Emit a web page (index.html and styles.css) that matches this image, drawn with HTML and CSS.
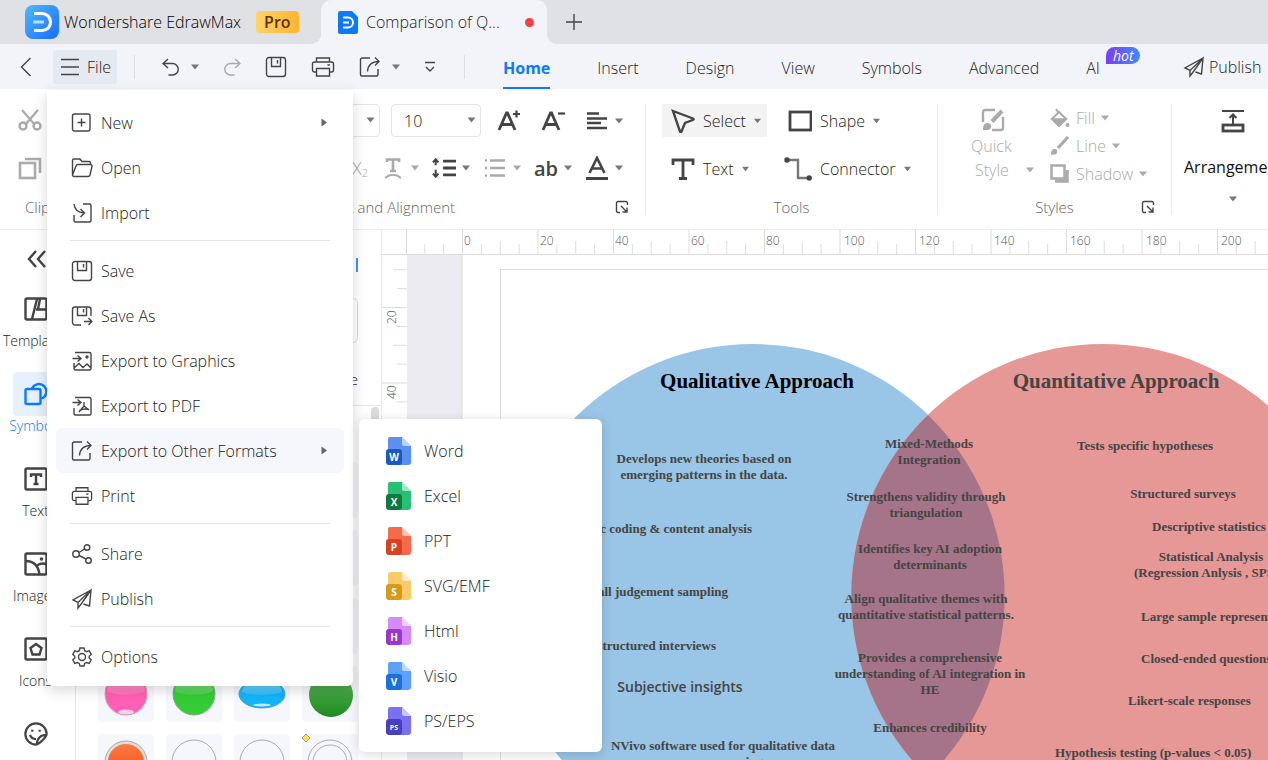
FILE: index.html
```html
<!DOCTYPE html>
<html lang="en">
<head>
	<meta charset="UTF-8">
	<title>Wondershare EdrawMax</title>
	<link rel="stylesheet" href="styles.css">
</head>
<body>
	<!-- icon sprite -->
	<svg class="sprite" aria-hidden="true">
		<defs>
			<linearGradient id="g-logo" x1="0" y1="0" x2="1" y2="1"><stop offset="0" stop-color="#4db8ff"/><stop offset="1" stop-color="#1a6dff"/></linearGradient>
			<linearGradient id="g-gloss" x1="0" y1="0" x2="0" y2="1"><stop offset="0" stop-color="#fff" stop-opacity=".5"/><stop offset="1" stop-color="#fff" stop-opacity=".1"/></linearGradient>
			<linearGradient id="g-green" x1="0" y1="0" x2="0" y2="1"><stop offset="0" stop-color="#5cb85c"/><stop offset="1" stop-color="#1f8a1f"/></linearGradient>
			<linearGradient id="g-orange" x1="0" y1="0" x2="0" y2="1"><stop offset="0" stop-color="#ff7a45"/><stop offset="1" stop-color="#f04a10"/></linearGradient>
		</defs>
		<symbol id="caret" viewBox="0 0 8 6"><path d="M0 .5h8L4 5.500z" fill="currentColor"/></symbol>
		<symbol id="caret-right" viewBox="0 0 6 8"><path d="M.5 0v8L6 4z" fill="currentColor"/></symbol>
		<symbol id="brand" viewBox="0 0 34 34"><rect width="34" height="34" rx="8" fill="url(#g-logo)"/><path d="M9 8.500h8a8.500 8.500 0 0 1 0 17H9" fill="none" stroke="#fff" stroke-width="3.200"/><path d="M8 17h11" stroke="#b9dcff" stroke-width="3"/></symbol>
		<symbol id="doc-tab" viewBox="0 0 20 23"><path d="M2 0h12l6 6v15a2 2 0 0 1-2 2H2a2 2 0 0 1-2-2V2a2 2 0 0 1 2-2z" fill="#0a7aff"/><path d="M5 6.500h5a5 5 0 0 1 0 10H5M5 11.500h6" fill="none" stroke="#fff" stroke-width="2"/></symbol>
		<symbol id="plus" viewBox="0 0 16 16"><path d="M8 0v16M0 8h16"/></symbol>
		<symbol id="back" viewBox="0 0 12 20"><path d="M11 1L2 10l9 9"/></symbol>
		<symbol id="lines" viewBox="0 0 18 18"><path d="M0 1.500h18M0 9h18M0 16.500h18"/></symbol>
		<symbol id="undo" viewBox="0 0 18 18"><path d="M6 1L1 5.500 6 10M1 5.500h9.500a5.700 5.700 0 0 1 0 11.500H6.500"/></symbol>
		<symbol id="redo" viewBox="0 0 18 18"><path d="M12 1l5 4.500-5 4.500M17 5.500H7.500a5.700 5.700 0 0 0 0 11.500h4"/></symbol>
		<symbol id="save" viewBox="0 0 22 22"><rect x="1.500" y="1.500" width="19" height="19" rx="2.500"/><path d="M6.500 2v8.500h9V2M12.500 4v3.500"/></symbol>
		<symbol id="save-as" viewBox="0 0 22 22"><path d="M10 20H4A2.500 2.500 0 0 1 1.500 17.500v-13A2.500 2.500 0 0 1 4 2h13.500A2.500 2.500 0 0 1 20 4.500V11M6.500 2v8.500h9V2M12.500 4v3.500M13 16.500h7.500M17.500 13l3.300 3.500-3.300 3.500"/></symbol>
		<symbol id="print" viewBox="0 0 24 22"><path d="M5.500 6V2h13v4M5.500 16H3.500A2 2 0 0 1 1.500 14V8a2 2 0 0 1 2-2h17a2 2 0 0 1 2 2v6a2 2 0 0 1-2 2h-2M5.500 12.500h13V20h-13zM16.500 9h2.500"/></symbol>
		<symbol id="export" viewBox="0 0 22 22"><path d="M11 2H3A1.500 1.500 0 0 0 1.500 3.500v15A1.500 1.500 0 0 0 3 20h14.500a1.500 1.500 0 0 0 1.500-1.500V13M16 1.500L20 5.500l-4 4M20 5.500C13 5.500 9 9 8.500 15.500"/></symbol>
		<symbol id="more" viewBox="0 0 12 12"><path d="M1 1.500h10M2 6l4 4 4-4"/></symbol>
		<symbol id="plane" viewBox="0 0 22 22"><path d="M20 2L2 12l5 2.500L20 2l-1.500 16-6-2M7 14.500V20l3.500-4.500L20 2"/></symbol>
		<symbol id="new" viewBox="0 0 22 22"><rect x="1.500" y="2" width="17.500" height="17" rx="2"/><path d="M10.500 6.500v8M6.500 10.500h8"/></symbol>
		<symbol id="open" viewBox="0 0 22 22"><path d="M1.500 18V3.500A1.500 1.500 0 0 1 3 2h6l2 2.500h7A1.500 1.500 0 0 1 19.500 6v1.500M1.500 18L5 9a2 2 0 0 1 2-1.500h12.500a1.500 1.500 0 0 1 1.500 2L19 18a2 2 0 0 1-2 1.500H3A1.500 1.500 0 0 1 1.500 18z"/></symbol>
		<symbol id="import" viewBox="0 0 22 22"><path d="M12 2h6.500A1.500 1.500 0 0 1 20 3.500v15a1.500 1.500 0 0 1-1.500 1.500h-14A1.500 1.500 0 0 1 3 18.500V13M3 2c.5 5.500 3.500 8.500 10 9M9.500 7l4 4-4 4"/></symbol>
		<symbol id="to-image" viewBox="0 0 22 22"><path d="M4 2.500h14.500A1.500 1.500 0 0 1 20 4v14.500a1.500 1.500 0 0 1-1.500 1.500h-14A1.500 1.500 0 0 1 3 18.500V13M1.500 8.500h8M6.500 5.500l3.500 3-3.500 3M3 18l5-4.500 4 4 4-3.500 4 4"/><circle cx="16" cy="7" r="1"/></symbol>
		<symbol id="to-pdf" viewBox="0 0 22 22"><path d="M4 2.500h14.500A1.500 1.500 0 0 1 20 4v14.500a1.500 1.500 0 0 1-1.500 1.500h-14A1.500 1.500 0 0 1 3 18.500V13M1.500 7.500h8M6.500 4.500l3.500 3-3.500 3M13 7v4l-5 6M13 11l5 4M8.500 15.500c3-1.500 6-2 9.500-1"/></symbol>
		<symbol id="share" viewBox="0 0 22 22"><circle cx="5" cy="11" r="3.200"/><circle cx="16" cy="4.500" r="2.800"/><circle cx="17.500" cy="17.500" r="2.800"/><path d="M8 9.500l5.500-3.500M8 12.500l7 3.500"/></symbol>
		<symbol id="gear" viewBox="0 0 22 22"><path d="M9 2h4l.7 2.700 1.800 1 2.700-.8 2 3.500-2 1.900v1.600l2 2-2 3.400-2.700-.8-1.800 1L13 20H9l-.7-2.500-1.800-1-2.700.8-2-3.400 2-2v-1.600l-2-1.900 2-3.500 2.700.8 1.800-1z"/><circle cx="11" cy="11" r="3.500"/></symbol>
		<symbol id="launcher" viewBox="0 0 14 14"><path d="M5 12.500H3A1.500 1.500 0 0 1 1.500 11V3A1.500 1.500 0 0 1 3 1.500h8A1.500 1.500 0 0 1 12.500 3v2M6 6l5.500 5.500M12 7.500V12H7.500"/></symbol>
		<symbol id="font-up" viewBox="0 0 24 24"><path d="M2 21L9.500 4h1L18 21M5 15.500h10" stroke-width="2.800"/><path d="M16 5h7M19.500 1.500v7" stroke-width="2.200"/></symbol>
		<symbol id="font-down" viewBox="0 0 24 24"><path d="M2 21L9.500 4h1L18 21M5 15.500h10" stroke-width="2.800"/><path d="M17 4.500h7" stroke-width="2.200"/></symbol>
		<symbol id="align" viewBox="0 0 24 24"><path d="M2 4.500h12M2 9.500h20M2 14h14M2 19h20" stroke-width="2.700"/></symbol>
		<symbol id="arc-text" viewBox="0 0 24 24"><path d="M6 6V3.500h12V6M12 3.500V15M9 15h6" stroke-width="2.600"/><path d="M4 22c5-4 11-4 16 0" stroke-width="2"/></symbol>
		<symbol id="spacing" viewBox="0 0 26 24"><path d="M12 4.500h14M12 12h14M12 19.500h14" stroke-width="3"/><path d="M4 3v6M1 6l3-3.500L7 6M4 14v7M1 18l3 3.500L7 18" stroke-width="2.200"/></symbol>
		<symbol id="list" viewBox="0 0 24 24"><path d="M7 4.500h15M7 12h15M7 19.500h15M2 4.500h2M2 12h2M2 19.500h2" stroke-width="2.400"/></symbol>
		<symbol id="font-color" viewBox="0 0 24 24"><path d="M4.500 17L12 2l7.500 15M7 12.500h10" stroke-width="2.600"/><path d="M1 22.500h22" stroke-width="3"/></symbol>
		<symbol id="cut" viewBox="0 0 24 24"><path d="M4 2l13 15M20 2L7 17" stroke-width="2.200"/><circle cx="5" cy="18" r="3.500" stroke-width="2.400"/><circle cx="19" cy="18" r="3.500" stroke-width="2.400"/></symbol>
		<symbol id="copy" viewBox="0 0 24 24"><rect x="2" y="7" width="15" height="15" stroke-width="2.600"/><path d="M7 3h15v14" stroke-width="2.600"/></symbol>
		<symbol id="cursor" viewBox="0 0 24 24"><path d="M2 2l20 7.500c1 .5 1 1-.2 1.500L14 14l-3.500 8.500c-.5 1-1.200 1-1.500 0z" stroke-width="2.400"/></symbol>
		<symbol id="rect" viewBox="0 0 24 24"><rect x="2" y="3" width="21" height="18" stroke-width="2.800"/></symbol>
		<symbol id="text" viewBox="0 0 24 24"><path d="M2 8V3h20v5M12 3v18M8 21.500h8" stroke-width="2.800"/></symbol>
		<symbol id="connector" viewBox="0 0 28 24"><path d="M3 3h11v18h10" stroke="#777" stroke-width="2.400"/><circle cx="3" cy="3" r="2.700" fill="currentColor" stroke="none"/><circle cx="25.200" cy="21" r="2.700" fill="currentColor" stroke="none"/></symbol>
		<symbol id="quick-style" viewBox="0 0 24 24"><path d="M14 2H4a2 2 0 0 0-2 2v10M22 9v11a2 2 0 0 1-2 2h-9" stroke-width="2.400"/><path d="M21 3L11 13.500" stroke-width="4"/><path d="M2 22c0-4 1-7 4.500-7s5 4 2.500 6c-2 1.500-5 1-7 1z" fill="currentColor" stroke="none"/></symbol>
		<symbol id="bucket" viewBox="0 0 20 20"><path d="M6 1l2 3M9 4l7 7-7 7-7-7z" stroke-width="2"/><path d="M2 11h14l-7 7z" fill="currentColor"/><circle cx="17.500" cy="17" r="2" fill="currentColor" stroke="none"/></symbol>
		<symbol id="brush" viewBox="0 0 20 20"><path d="M18 1L8 12" stroke-width="3.200"/><path d="M1 18.500c0-4 1.500-6 4-5.500s3 3.500 1 5c-1.500 1-3 .5-5 .5z" fill="currentColor" stroke="none"/></symbol>
		<symbol id="shadow" viewBox="0 0 20 20"><path d="M5 17h12V6" stroke-width="3.500"/><rect x="1.500" y="1.500" width="13" height="13" fill="#fff" stroke-width="2.500"/></symbol>
		<symbol id="arrange" viewBox="0 0 24 24"><path d="M1 2h22M12 15V6M8.500 9L12 5.500 15.500 9" stroke-width="2"/><rect x="2" y="16" width="20" height="6" stroke-width="2.800"/></symbol>
		<symbol id="collapse" viewBox="0 0 20 18"><path d="M9 1L2 9l7 8M18 1l-7 8 7 8"/></symbol>
		<symbol id="template" viewBox="0 0 24 24"><rect x="1.500" y="1.500" width="21" height="21" rx="1.500"/><path d="M13 2L8 22M12 12.500h10M16 2l-2 10"/></symbol>
		<symbol id="shapes" viewBox="0 0 24 24"><path d="M8 6.500a7.500 7.500 0 1 1 9.500 10"/><rect x="1.500" y="7" width="15" height="15" rx="1.500"/></symbol>
		<symbol id="text-box" viewBox="0 0 24 24"><rect x="1.500" y="1.500" width="21" height="21" rx="1.500"/><path d="M7 10V7.500h10V10M12 7.500v9M9.500 17h5"/></symbol>
		<symbol id="picture" viewBox="0 0 24 24"><rect x="1.500" y="1.500" width="21" height="21" rx="1.500"/><path d="M2 9c7 0 12 4 13.500 13M12.500 14c2.500-2.500 6-3 10-2"/><circle cx="17.500" cy="7" r="1" stroke-width="1.500"/></symbol>
		<symbol id="pentagon" viewBox="0 0 24 24"><rect x="1.500" y="1.500" width="21" height="21" rx="1.500"/><path d="M12 7l5.500 4-2 6.500h-7l-2-6.500z"/></symbol>
		<symbol id="sticker" viewBox="0 0 26 26"><path d="M24 14c-6 0-10 4-10 10M13 24.500A11.500 11.500 0 1 1 24.500 13c0 2-5 9.500-11.500 11.500zM6.500 14c1 3 3.500 4.500 6.500 4.500"/><path d="M9 8.500v2M17 8.500v2"/></symbol>
		<symbol id="file-format" viewBox="0 0 26 30"><path class="sheet-page" d="M5 1h12l9 9v16a3 3 0 0 1-3 3H6a3 3 0 0 1-3-3V3a2 2 0 0 1 2-2z"/><path d="M17 1l9 9h-7a2 2 0 0 1-2-2z" fill="#fff" opacity=".6"/><rect class="sheet-badge" x="1" y="13" width="16" height="16" rx="3"/></symbol>
	</svg>

	<div class="app">
		<header class="titlebar">
			<div class="brand">
				<svg class="logo"><use href="#brand"/></svg>
				<span>Wondershare EdrawMax</span>
				<span class="pro">Pro</span>
			</div>
			<div class="doc-tab">
				<svg><use href="#doc-tab"/></svg>
				<span>Comparison of Q...</span>
				<i class="unsaved"></i>
			</div>
			<button class="add-tab" aria-label="New tab"><svg class="ico"><use href="#plus"/></svg></button>
		</header>

		<div class="quickbar">
			<button class="qb-back" aria-label="Back"><svg class="ico"><use href="#back"/></svg></button>
			<div class="file-wrap">
				<button class="file-btn"><svg class="ico"><use href="#lines"/></svg>File</button>
				<ul class="menu">
					<li><button><svg class="ico"><use href="#new"/></svg>New<svg class="arrow"><use href="#caret-right"/></svg></button></li>
					<li><button><svg class="ico"><use href="#open"/></svg>Open</button></li>
					<li><button><svg class="ico"><use href="#import"/></svg>Import</button></li>
					<li class="sep"></li>
					<li><button><svg class="ico"><use href="#save"/></svg>Save</button></li>
					<li><button><svg class="ico"><use href="#save-as"/></svg>Save As</button></li>
					<li><button><svg class="ico"><use href="#to-image"/></svg>Export to Graphics</button></li>
					<li><button><svg class="ico"><use href="#to-pdf"/></svg>Export to PDF</button></li>
					<li class="open">
						<button><svg class="ico"><use href="#export"/></svg>Export to Other Formats<svg class="arrow"><use href="#caret-right"/></svg></button>
						<ul class="submenu">
							<li><button><svg class="fmt word"><use href="#file-format"/><text x="9" y="25">W</text></svg>Word</button></li>
							<li><button><svg class="fmt excel"><use href="#file-format"/><text x="9" y="25">X</text></svg>Excel</button></li>
							<li><button><svg class="fmt ppt"><use href="#file-format"/><text x="9" y="25">P</text></svg>PPT</button></li>
							<li><button><svg class="fmt svg"><use href="#file-format"/><text x="9" y="25">S</text></svg>SVG/EMF</button></li>
							<li><button><svg class="fmt html"><use href="#file-format"/><text x="9" y="25">H</text></svg>Html</button></li>
							<li><button><svg class="fmt visio"><use href="#file-format"/><text x="9" y="25">V</text></svg>Visio</button></li>
							<li><button><svg class="fmt ps"><use href="#file-format"/><text class="small" x="9" y="24">PS</text></svg>PS/EPS</button></li>
						</ul>
					</li>
					<li><button><svg class="ico"><use href="#print"/></svg>Print</button></li>
					<li class="sep"></li>
					<li><button><svg class="ico"><use href="#share"/></svg>Share</button></li>
					<li><button><svg class="ico"><use href="#plane"/></svg>Publish</button></li>
					<li class="sep"></li>
					<li><button><svg class="ico"><use href="#gear"/></svg>Options</button></li>
				</ul>
			</div>
			<span class="bar"></span>
			<div class="tools">
				<button class="with-caret" aria-label="Undo"><svg class="ico s18"><use href="#undo"/></svg><svg class="caret"><use href="#caret"/></svg></button>
				<button class="off" aria-label="Redo"><svg class="ico s18"><use href="#redo"/></svg></button>
				<button aria-label="Save"><svg class="ico"><use href="#save"/></svg></button>
				<button aria-label="Print"><svg class="ico wide"><use href="#print"/></svg></button>
				<button class="with-caret" aria-label="Export"><svg class="ico"><use href="#export"/></svg><svg class="caret"><use href="#caret"/></svg></button>
				<button aria-label="More"><svg class="ico s12"><use href="#more"/></svg></button>
			</div>
			<span class="bar tabs-bar"></span>
			<nav class="tabs">
				<a href="#" class="on">Home</a>
				<a href="#">Insert</a>
				<a href="#">Design</a>
				<a href="#">View</a>
				<a href="#">Symbols</a>
				<a href="#">Advanced</a>
				<a href="#">AI<span class="hot">hot</span></a>
			</nav>
			<button class="publish"><svg class="ico"><use href="#plane"/></svg>Publish</button>
		</div>

		<section class="ribbon">
			<div class="group clipboard">
				<div class="row"><button class="off" aria-label="Cut"><svg class="ico"><use href="#cut"/></svg></button></div>
				<div class="row"><button class="off" aria-label="Copy"><svg class="ico"><use href="#copy"/></svg></button></div>
				<div class="group-name">Clipboard</div>
			</div>
			<div class="group font">
				<div class="row">
					<label class="combo family"><select aria-label="Font"><option></option></select><svg class="caret"><use href="#caret"/></svg></label>
					<label class="combo size"><select aria-label="Font size"><option>10</option></select><svg class="caret"><use href="#caret"/></svg></label>
					<button class="grow" aria-label="Larger"><svg class="ico"><use href="#font-up"/></svg></button>
					<button class="grow" aria-label="Smaller"><svg class="ico"><use href="#font-down"/></svg></button>
					<button class="pair" aria-label="Align"><svg class="ico"><use href="#align"/></svg><svg class="caret"><use href="#caret"/></svg></button>
				</div>
				<div class="row second">
					<button class="off sub">X<sub>2</sub></button>
					<button class="pair off" aria-label="Text path"><svg class="ico"><use href="#arc-text"/></svg><svg class="caret"><use href="#caret"/></svg></button>
					<button class="pair" aria-label="Line spacing"><svg class="ico"><use href="#spacing"/></svg><svg class="caret"><use href="#caret"/></svg></button>
					<button class="pair off" aria-label="Bullets"><svg class="ico"><use href="#list"/></svg><svg class="caret"><use href="#caret"/></svg></button>
					<button class="pair"><span class="ab">ab</span><svg class="caret"><use href="#caret"/></svg></button>
					<button class="pair" aria-label="Font color"><svg class="ico"><use href="#font-color"/></svg><svg class="caret"><use href="#caret"/></svg></button>
				</div>
				<div class="group-name">Font and Alignment<svg class="ico launcher"><use href="#launcher"/></svg></div>
			</div>
			<div class="group draw">
				<div class="grid">
					<button class="on"><svg class="ico"><use href="#cursor"/></svg>Select<svg class="caret"><use href="#caret"/></svg></button>
					<button><svg class="ico"><use href="#rect"/></svg>Shape<svg class="caret"><use href="#caret"/></svg></button>
					<button><svg class="ico"><use href="#text"/></svg>Text<svg class="caret"><use href="#caret"/></svg></button>
					<button><svg class="ico conn"><use href="#connector"/></svg>Connector<svg class="caret"><use href="#caret"/></svg></button>
				</div>
				<div class="group-name">Tools</div>
			</div>
			<div class="group styles">
				<div class="style-body">
					<button class="quick off">
						<svg class="ico"><use href="#quick-style"/></svg>
						<span>Quick</span>
						<span class="quick-2">Style<svg class="caret"><use href="#caret"/></svg></span>
					</button>
					<div class="style-list">
						<button class="off"><svg class="ico"><use href="#bucket"/></svg>Fill<svg class="caret"><use href="#caret"/></svg></button>
						<button class="off"><svg class="ico"><use href="#brush"/></svg>Line<svg class="caret"><use href="#caret"/></svg></button>
						<button class="off"><svg class="ico"><use href="#shadow"/></svg>Shadow<svg class="caret"><use href="#caret"/></svg></button>
					</div>
				</div>
				<div class="group-name">Styles<svg class="ico launcher"><use href="#launcher"/></svg></div>
			</div>
			<div class="group arrange">
				<button>
					<svg class="ico"><use href="#arrange"/></svg>
					<span>Arrangement</span>
					<svg class="caret"><use href="#caret"/></svg>
				</button>
			</div>
		</section>

		<main class="work">
			<aside class="rail">
				<button class="collapse" aria-label="Collapse"><svg class="ico"><use href="#collapse"/></svg></button>
				<button class="rail-item"><span><svg class="ico"><use href="#template"/></svg></span>Templates</button>
				<button class="rail-item on"><span><svg class="ico"><use href="#shapes"/></svg></span>Symbols</button>
				<button class="rail-item"><span><svg class="ico"><use href="#text-box"/></svg></span>Text</button>
				<button class="rail-item"><span><svg class="ico"><use href="#picture"/></svg></span>Images</button>
				<button class="rail-item"><span><svg class="ico"><use href="#pentagon"/></svg></span>Icons</button>
				<button class="rail-item"><span><svg class="ico"><use href="#sticker"/></svg></span>Stickers</button>
			</aside>

			<aside class="library">
				<div class="lib-head">
					<div class="lib-tab"></div>
					<input class="lib-search" type="text" aria-label="Search symbols">
					<div class="lib-manage">Manage</div>
				</div>
				<div class="lib-body">
					<div class="cells">
						<div></div><div></div><div></div><div></div>
						<div></div><div></div><div></div><div></div>
						<div></div><div></div><div></div><div></div>
						<div><svg viewBox="0 0 56 56"><circle cx="28" cy="28" r="21" fill="#ff5fb4" stroke="#d9a" /><path d="M9 25a19 17 0 0 1 38 0c-8 5-30 5-38 0z" fill="url(#g-gloss)"/><ellipse cx="28" cy="46" rx="8" ry="2.500" fill="#fff" opacity=".7"/></svg></div>
						<div><svg viewBox="0 0 56 56"><circle cx="28" cy="28" r="21" fill="#35cc35" stroke="#8a8"/><path d="M9 25a19 17 0 0 1 38 0c-8 5-30 5-38 0z" fill="url(#g-gloss)"/></svg></div>
						<div><svg viewBox="0 0 56 56"><ellipse cx="28" cy="28" rx="23" ry="14" fill="#12b5fa" stroke="#59b"/><path d="M8 26a20 12 0 0 1 40 0c-9 4-31 4-40 0z" fill="url(#g-gloss)"/><ellipse cx="28" cy="39" rx="9" ry="1.500" fill="#fff" opacity=".7"/></svg></div>
						<div><svg viewBox="0 0 56 56"><circle cx="29" cy="29" r="22" fill="url(#g-green)"/></svg></div>
						<div><svg viewBox="0 0 56 56"><circle cx="28" cy="28" r="21" fill="#ddd" stroke="#aaa"/><circle cx="28" cy="28" r="18" fill="url(#g-orange)"/></svg></div>
						<div><svg viewBox="0 0 56 56"><circle cx="28" cy="28" r="22" fill="none" stroke="#aaa"/></svg></div>
						<div><svg viewBox="0 0 56 56"><circle cx="28" cy="28" r="22" fill="none" stroke="#aaa"/></svg></div>
						<div><svg viewBox="0 0 56 56"><circle cx="28" cy="28" r="22" fill="none" stroke="#aaa"/><circle cx="28" cy="28" r="17" fill="none" stroke="#aaa"/><path d="M4 0l4 4-4 4-4-4z" fill="#ffe04d" stroke="#a98"/></svg></div>
					</div>
				</div>
			</aside>

			<section class="stage">
				<div class="corner"></div>
				<svg class="ruler ruler-x">
					<defs>
						<pattern id="ticks-x" x="55" y="0" width="75.500" height="26" patternUnits="userSpaceOnUse">
							<path d="M.5 0v26M19.400 14v11M38.200 11v14M57.100 14v11" stroke="#ddd"/>
						</pattern>
					</defs>
					<rect width="100%" height="26" fill="url(#ticks-x)"/>
					<rect width="19" height="14" fill="#fff"/>
					<text x="57" y="15">0</text><text x="133" y="15">20</text><text x="208" y="15">40</text><text x="284" y="15">60</text><text x="359" y="15">80</text><text x="437" y="15">100</text><text x="512" y="15">120</text><text x="587" y="15">140</text><text x="663" y="15">160</text><text x="739" y="15">180</text><text x="814" y="15">200</text>
				</svg>
				<svg class="ruler ruler-y">
					<defs>
						<pattern id="ticks-y" x="0" y="52" width="26" height="75.500" patternUnits="userSpaceOnUse">
							<path d="M0 .5h26M15 19.400h11M11 38.200h15M15 57.100h11" stroke="#ddd"/>
						</pattern>
					</defs>
					<rect width="26" height="100%" fill="url(#ticks-y)"/>
					<text transform="translate(14 69) rotate(-90)">20</text>
					<text transform="translate(14 144) rotate(-90)">40</text>
				</svg>
				<svg class="canvas">
					<rect x="55" y="-10" width="2000" height="2000" fill="#fff" stroke="#ddd"/>
					<rect x="93.500" y="14.500" width="2000" height="2000" fill="none" stroke="#ddd"/>
					<circle cx="346" cy="341" r="252" fill="#99c5e6"/>
					<circle cx="696" cy="341" r="252" fill="#e59896"/>
					<path d="M521 160a252 252 0 0 1 0 362a252 252 0 0 1 0-362z" fill="#a67488"/>

					<g class="title">
						<text class="dark" x="350" y="133">Qualitative Approach</text>
						<text x="709" y="133">Quantitative Approach</text>
					</g>
					<g class="node">
						<text x="297" y="208">Develops new theories based on<tspan x="297" dy="16">emerging patterns in the data.</tspan></text>
						<text class="end" x="345" y="278">Thematic coding &amp; content analysis</text>
						<text class="end" x="321" y="341">Small judgement sampling</text>
						<text class="end" x="309" y="395">Semi-structured interviews</text>
						<text class="sans" x="273" y="437">Subjective insights</text>
						<text x="316" y="495">NVivo software used for qualitative data<tspan x="327" dy="16">processing</tspan></text>
					</g>
					<g class="node">
						<text x="522" y="193">Mixed-Methods<tspan x="522" dy="16">Integration</tspan></text>
						<text x="519" y="246">Strengthens validity through<tspan x="519" dy="16">triangulation</tspan></text>
						<text x="523" y="298">Identifies key AI adoption<tspan x="523" dy="16">determinants</tspan></text>
						<text x="519" y="348">Align qualitative themes with<tspan x="519" dy="16">quantitative statistical patterns.</tspan></text>
						<text x="523" y="407">Provides a comprehensive<tspan x="523" dy="16">understanding of AI integration in</tspan><tspan x="523" dy="16">HE</tspan></text>
						<text x="523" y="477">Enhances credibility</text>
					</g>
					<g class="node">
						<text x="738" y="195">Tests specific hypotheses</text>
						<text x="776" y="243">Structured surveys</text>
						<text class="start" x="745" y="276">Descriptive statistics</text>
						<text x="804" y="306">Statistical Analysis</text>
						<text class="start" x="727" y="322">(Regression Anlysis , SPSS)</text>
						<text class="start" x="734" y="366">Large sample representation</text>
						<text class="start" x="734" y="408">Closed-ended questions</text>
						<text class="start" x="721" y="450">Likert-scale responses</text>
						<text class="start" x="648" y="502">Hypothesis testing (p-values &lt; 0.05)</text>
					</g>
				</svg>
			</section>
		</main>
	</div>
</body>
</html>
```

FILE: styles.css
```css
*{margin:0;padding:0;box-sizing:border-box;}
body{font-family:"Open Sans","Noto Sans",sans-serif;font-size:16px;font-weight:300;color:#222;}
ul{list-style:none;}
a{color:inherit;text-decoration:none;}
button,select,input{font:inherit;color:inherit;border:0;background:none;}
button{display:flex;align-items:center;white-space:nowrap;}
svg{display:block;flex:none;}
.sprite{position:absolute;width:0;height:0;}
.ico{width:22px;height:22px;fill:none;stroke:currentColor;stroke-width:1.4;color:#444;}
.caret{width:8px;height:6px;color:#777;}
.off,.off .ico,.off .caret{color:#aaa;}

.app{height:100vh;display:flex;flex-direction:column;overflow:hidden;background-color:#fff;}

/*title bar*/
.titlebar{height:44px;display:flex;background-color:#e0e1e5;flex:none;}
.brand{width:321px;display:flex;align-items:center;padding-left:25px;color:#000;gap:5px;flex:none;}
.logo{width:34px;height:34px;}
.pro{margin-left:10px;padding:0 8px;line-height:22px;border-radius:4px;background:linear-gradient(90deg,#ffd36a,#ffb52e);color:#5c3200;font-weight:600;}
.doc-tab{position:relative;width:226px;display:flex;align-items:center;padding-left:17px;background-color:#f3f4f9;border-radius:10px 10px 0 0;flex:none;}
.doc-tab:before,.doc-tab:after{content:"";position:absolute;bottom:0;width:10px;height:10px;}
.doc-tab:before{left:-10px;background:radial-gradient(circle at 0 0,transparent 10px,#f3f4f9 10px);}
.doc-tab:after{right:-10px;background:radial-gradient(circle at 100% 0,transparent 10px,#f3f4f9 10px);}
.doc-tab svg{width:20px;height:23px;margin-right:8px;}
.unsaved{width:9px;height:9px;border-radius:50%;background-color:#fa3e46;margin-left:auto;margin-right:13px;}
.add-tab{padding-left:19px;}
.add-tab .ico{width:16px;height:16px;}

/*quick access bar and tabs*/
.quickbar{height:45px;display:flex;align-items:center;background-color:#f3f4f9;flex:none;}
.qb-back{padding:0 21px 0 19px;}
.qb-back .ico{width:13px;height:20px;}
.file-wrap{position:relative;}
.file-btn{height:34px;width:64px;gap:8px;padding-left:8px;background-color:#e5e9f2;border-radius:3px;}
.file-btn .ico{width:18px;height:18px;}
.bar{width:1px;height:24px;background-color:#dcdee4;margin-left:17px;flex:none;}
.tabs-bar{margin-left:28px;}
.tools{display:flex;align-items:center;gap:24px;padding-left:27px;}
.tools .with-caret{gap:11px;}
.s18{width:18px;height:18px;}
.s12{width:12px;height:12px;}
.ico.wide{width:24px;}
.tabs{display:flex;gap:47px;padding-left:38px;height:45px;}
.tabs a{position:relative;line-height:48px;}
.tabs .on{color:#0a7aff;font-weight:700;border-bottom:2px solid #0a7aff;}
.hot{position:absolute;left:20px;top:3px;width:34px;border-radius:9px 9px 9px 0;background:linear-gradient(90deg,#7a3cff,#3f8cff);color:#fff;font-size:14px;font-style:italic;font-weight:400;line-height:17px;text-align:center;}
.publish{margin-left:83px;gap:4px;}

/*file menu*/
.menu{position:absolute;left:-6px;top:40px;width:306px;padding:10px 9px 7px;background-color:#fff;border-radius:0 0 6px 6px;box-shadow:0 4px 14px rgba(0,0,0,.16);z-index:10;}
.menu li{position:relative;}
.menu button{width:100%;height:45px;padding:1px 0 0 15px;gap:8px;border-radius:6px;}
.menu .sep{height:1px;margin:5px 14px 7px;background-color:#e4e5e9;}
.menu .open > button{background-color:#f5f7fc;}
.arrow{width:6px;height:9px;margin-left:auto;margin-right:17px;color:#666;}
.submenu{position:absolute;left:303px;top:-9px;width:243px;padding:9px 0;background-color:#fff;border-radius:6px;box-shadow:0 2px 12px rgba(0,0,0,.16);}
.menu .submenu button{padding-left:26px;gap:13px;}
.fmt{width:26px;height:30px;}
.fmt text{fill:#fff;font-size:10px;font-weight:700;text-anchor:middle;}
.fmt .small{font-size:7px;}
.sheet-page{fill:var(--page);}
.sheet-badge{fill:var(--badge);}
.word{--page:#5b8ff0;--badge:#1c59bf;}
.excel{--page:#27bf73;--badge:#0b7a41;}
.ppt{--page:#f56a48;--badge:#dc4020;}
.svg{--page:#fbcb6b;--badge:#d99a1c;}
.html{--page:#d68af8;--badge:#9a35cf;}
.visio{--page:#5e9ffb;--badge:#1a70e0;}
.ps{--page:#7a70f2;--badge:#4a3fc4;}

/*ribbon*/
.ribbon{height:141px;display:flex;padding-top:15px;border-bottom:1px solid #ececf0;flex:none;overflow:hidden;}
.group{display:flex;flex-direction:column;height:111px;border-right:1px solid #ebebee;flex:none;}
.ribbon .ico{width:24px;height:24px;}
.row{display:flex;align-items:center;height:33px;margin-bottom:15px;}
.group-name{position:relative;margin-top:auto;line-height:16px;font-size:15px;color:#666;text-align:center;}
.group .launcher{position:absolute;right:16px;top:1px;width:14px;height:14px;}
.clipboard{width:112px;padding-left:18px;border:0;}
.clipboard .group-name{text-align:left;padding-left:7px;}
.font{width:534px;padding-right:22px;}
.font .row{justify-content:flex-end;}
.font .group-name{text-align:right;padding-right:168px;}
.font .launcher{right:-6px;}
.combo{position:relative;display:block;height:33px;margin-right:11px;border:1px solid #e4e4e8;border-radius:4px;}
.combo select{width:100%;height:100%;padding-left:12px;appearance:none;}
.combo .caret{position:absolute;right:4px;top:12px;width:9px;}
.family{width:200px;}
.size{width:90px;margin-right:16px;}
.grow{margin-right:20px;}
.pair{width:38px;gap:6px;}
.second{gap:13px;}
.sub{font-size:18px;}
.sub sub{font-size:11px;align-self:flex-end;}
.ab{width:24px;font-size:20px;font-weight:600;color:#444;}
.draw{width:292px;padding-left:16px;}
.grid{display:grid;grid-template-columns:105px auto;column-gap:12px;row-gap:15px;justify-content:start;}
.grid button{height:33px;padding-left:9px;gap:8px;}
.grid .caret{width:7px;}
.grid .on{background-color:#f3f3f3;}
.ribbon .conn{width:28px;margin-left:-4px;}
.draw .group-name{padding-right:16px;}
.styles{width:234px;}
.style-body{display:flex;padding-left:33px;gap:13px;}
.quick{flex-direction:column;width:66px;align-items:flex-start;line-height:24px;padding-top:4px;}
.quick .ico{margin:0 0 2px 10px;}
.quick-2{display:flex;align-items:center;justify-content:space-between;width:63px;padding-left:4px;}
.style-list button{height:28px;gap:6px;}
.style-list .ico{width:20px;height:20px;}
.arrange{border:0;}
.arrange button{flex-direction:column;padding:5px 12px 0;color:#111;font-weight:400;line-height:24px;}
.arrange span{margin:22px 0 17px;}

/*work area*/
.work{flex:1;display:flex;min-height:0;}
.rail{width:76px;display:flex;flex-direction:column;align-items:center;border-right:1px solid #e6e7eb;flex:none;overflow:hidden;}
.rail .ico{width:24px;height:24px;stroke-width:2.4;}
.collapse{height:57px;padding-right:2px;flex:none;}
.rail .collapse .ico{width:20px;height:18px;}
.rail-item{flex:none;flex-direction:column;height:85px;width:76px;padding-right:4px;font-size:14px;line-height:20px;}
.rail-item span{display:flex;align-items:center;justify-content:center;width:46px;height:44px;border-radius:4px;}
.rail-item.on,.rail-item.on .ico{color:#0a7aff;}
.rail-item.on span{background-color:#e6f1fd;}
.library{width:306px;display:flex;flex-direction:column;border-right:1px solid #e6e7eb;flex:none;overflow:hidden;}
.lib-head{height:176px;padding:28px 23px 0;border-bottom:1px solid #e6e7eb;flex:none;}
.lib-tab{width:2px;height:14px;margin-left:auto;background-color:#3d94f6;}
.lib-search{display:block;width:100%;height:45px;margin-top:26px;border:1px solid #dcdde2;border-radius:5px;}
.lib-manage{margin-top:26px;text-align:right;font-size:15px;line-height:20px;}
.lib-body{position:relative;padding:56px 22px 0;}
.lib-body:after{content:"";position:absolute;right:2px;top:1px;width:8px;height:90px;border-radius:4px;background-color:#dcdce0;}
.cells{display:grid;grid-template-columns:repeat(4,56px);gap:12px;}
.cells div{height:56px;background-color:#f6f7fc;border-radius:4px;}

/*drawing stage*/
.stage{flex:1;display:grid;grid-template-columns:25px 1fr;grid-template-rows:25px 1fr;min-width:0;}
.corner,.ruler-x{border-bottom:1px solid #ddd;}
.corner{border-right:1px solid #ddd;}
.ruler{width:100%;height:100%;overflow:hidden;}
.ruler text{font-size:12px;fill:#555;}
.canvas{width:100%;height:100%;background-color:#ebebf1;overflow:hidden;}
.canvas text{font-family:"Liberation Serif",serif;font-weight:700;fill:#444;text-anchor:middle;}
.canvas .title text{font-size:21px;}
.canvas .title .dark{fill:#000;}
.node text{font-size:13px;}
.canvas .end{text-anchor:end;}
.canvas .start{text-anchor:start;}
.canvas .sans{font-family:"Open Sans","Noto Sans",sans-serif;font-size:14px;font-weight:600;}
```
